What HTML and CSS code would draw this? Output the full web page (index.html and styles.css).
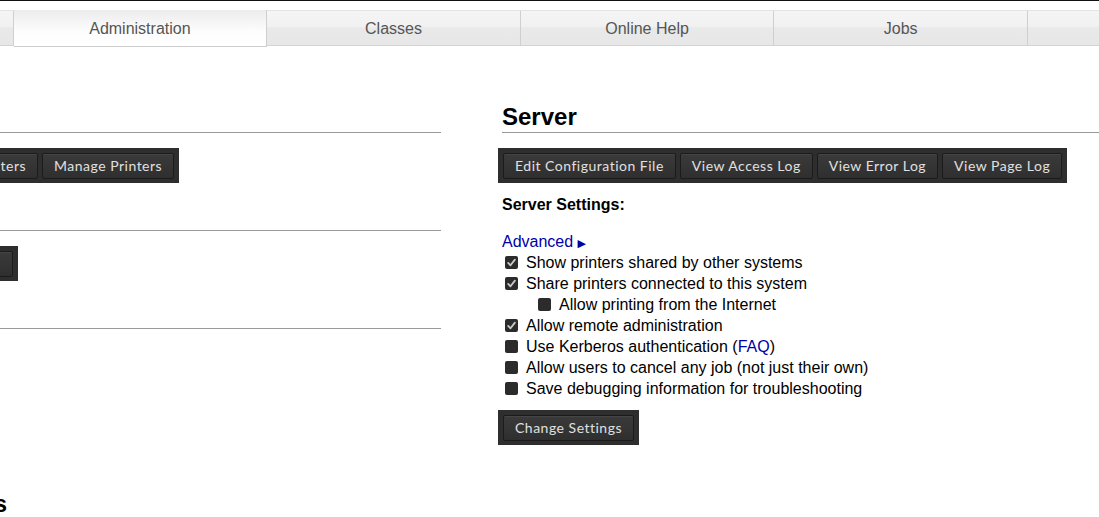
FILE: index.html
```html
<!DOCTYPE html>
<html lang="en">
<head>
<meta charset="utf-8">
<title>Administration - CUPS</title>
<link rel="stylesheet" href="styles.css">
</head>
<body>
<div class="topline"></div>
<nav class="tabs">
  <ul>
    <li>Home</li>
    <li class="active">Administration</li>
    <li>Classes</li>
    <li>Online Help</li>
    <li>Jobs</li>
    <li>Printers</li>
  </ul>
</nav>
<main class="page">
  <div class="cols">
    <section class="col left">
      <h2>Printers</h2>
      <div class="btnbar"><button>Add Printer</button><button>Find New Printers</button><button>Manage Printers</button></div>
      <h2>Classes</h2>
      <div class="btnbar"><button>Add Class</button><button>Manage Classes</button></div>
      <h2>Jobs</h2>
      <div class="btnbar"><button>Manage Jobs</button></div>
    </section>
    <section class="col right">
      <h2>Server</h2>
      <div class="btnbar"><button>Edit Configuration File</button><button>View Access Log</button><button>View Error Log</button><button>View Page Log</button></div>
      <p class="settings-title">Server Settings:</p>
      <p class="advanced"><a href="#">Advanced <span class="tri">▶</span></a></p>
      <div class="opt"><span class="cb on"><svg viewBox="0 0 13 13" width="13" height="13"><path d="M3.2 6.9 L5.5 9.3 L9.9 3.6" fill="none" stroke="#c9c9c9" stroke-width="1.8" stroke-linecap="round" stroke-linejoin="round"/></svg></span>Show printers shared by other systems</div>
      <div class="opt"><span class="cb on"><svg viewBox="0 0 13 13" width="13" height="13"><path d="M3.2 6.9 L5.5 9.3 L9.9 3.6" fill="none" stroke="#c9c9c9" stroke-width="1.8" stroke-linecap="round" stroke-linejoin="round"/></svg></span>Share printers connected to this system</div>
      <div class="opt sub"><span class="cb"></span>Allow printing from the Internet</div>
      <div class="opt"><span class="cb on"><svg viewBox="0 0 13 13" width="13" height="13"><path d="M3.2 6.9 L5.5 9.3 L9.9 3.6" fill="none" stroke="#c9c9c9" stroke-width="1.8" stroke-linecap="round" stroke-linejoin="round"/></svg></span>Allow remote administration</div>
      <div class="opt"><span class="cb"></span>Use Kerberos authentication (<a href="#">FAQ</a>)</div>
      <div class="opt"><span class="cb"></span>Allow users to cancel any job (not just their own)</div>
      <div class="opt"><span class="cb"></span>Save debugging information for troubleshooting</div>
      <div class="btnbar last"><button>Change Settings</button></div>
    </section>
  </div>
  <h2 class="rss">RSS Subscriptions</h2>
</main>
</body>
</html>
```
FILE: styles.css
```css
html, body {
  margin: 0;
  padding: 0;
  background: #fff;
  overflow: hidden;
}
body {
  font-family: "Liberation Sans", Arial, sans-serif;
  font-size: 16px;
  color: #000;
}
.topline {
  height: 1px;
  background: #111;
}
.tabs {
  margin-top: 9px;
  height: 34px;
  border-top: 1px solid #e3e3e3;
  border-bottom: 1px solid #d3d3d3;
  background: linear-gradient(#f5f5f5 0%, #f1f1f1 45%, #e9e9e9 50%, #e7e7e7 100%);
}
.tabs ul {
  display: flex;
  margin: 0 0 0 -240px;
  padding: 0;
  list-style: none;
  height: 34px;
}
.tabs li {
  flex: 0 0 253.6px;
  box-sizing: border-box;
  height: 35px;
  line-height: 35px;
  text-align: center;
  color: #555;
  font-size: 16px;
  border-right: 1px solid #cfcfcf;
}
.tabs li.active {
  height: 37px;
  margin-top: -1px;
  line-height: 37px;
  background: linear-gradient(#ececec, #fdfdfd 60%, #fff);
  border-bottom: 1px solid #ccc;
}
.page {
  margin: 54px 0 0 -209px;
}
.cols {
  display: grid;
  grid-template-columns: 650px 643px;
  column-gap: 61px;
  align-items: start;
}
.col.left {
  padding-left: 7px;
}
h2 {
  margin: 0;
  font-size: 24px;
  line-height: 28px;
  font-weight: bold;
  padding: 3px 0 1px;
  border-bottom: 1px solid #999;
  white-space: nowrap;
}
.btnbar {
  display: flex;
  width: max-content;
  gap: 4px;
  background: #2e2e2e;
  padding: 5px 5px 4px;
  margin: 15px 0 15px -4px;
}
.col.left .btnbar {
  margin-left: -12px;
}
.col.right .btnbar {
  margin-bottom: 0;
}
.btnbar.last {
  margin: 11px 0 0 -4px;
}
.btnbar button {
  font-family: Lato, "Noto Sans", sans-serif;
  font-size: 14px;
  letter-spacing: 0.5px;
  height: 26px;
  padding: 0 11px 1px;
  color: #e0e0e0;
  background: linear-gradient(#3a3a3a, #2f2f2f);
  border: 1px solid #1b1b1b;
  border-radius: 2px;
  box-shadow: inset 0 1px 0 rgba(255, 255, 255, 0.06);
  white-space: nowrap;
  cursor: pointer;
}
.settings-title {
  margin: 12px 0 16px;
  font-weight: bold;
  line-height: 20px;
}
.advanced {
  margin: 0;
  height: 21px;
  line-height: 21px;
}
a {
  color: #0000a8;
  text-decoration: none;
}
.tri {
  font-family: "DejaVu Sans", sans-serif;
  font-size: 11px;
  line-height: 1;
}
.opt {
  display: flex;
  align-items: center;
  height: 21px;
  white-space: nowrap;
}
.opt.sub {
  padding-left: 33px;
}
.cb {
  flex: 0 0 13px;
  width: 13px;
  height: 13px;
  margin: 0 8px 0 3px;
  background: #2b2b2b;
  border-radius: 2px;
  display: block;
}
.cb svg {
  display: block;
}
.rss {
  margin-top: 42px;
  border-bottom: none;
}
```
